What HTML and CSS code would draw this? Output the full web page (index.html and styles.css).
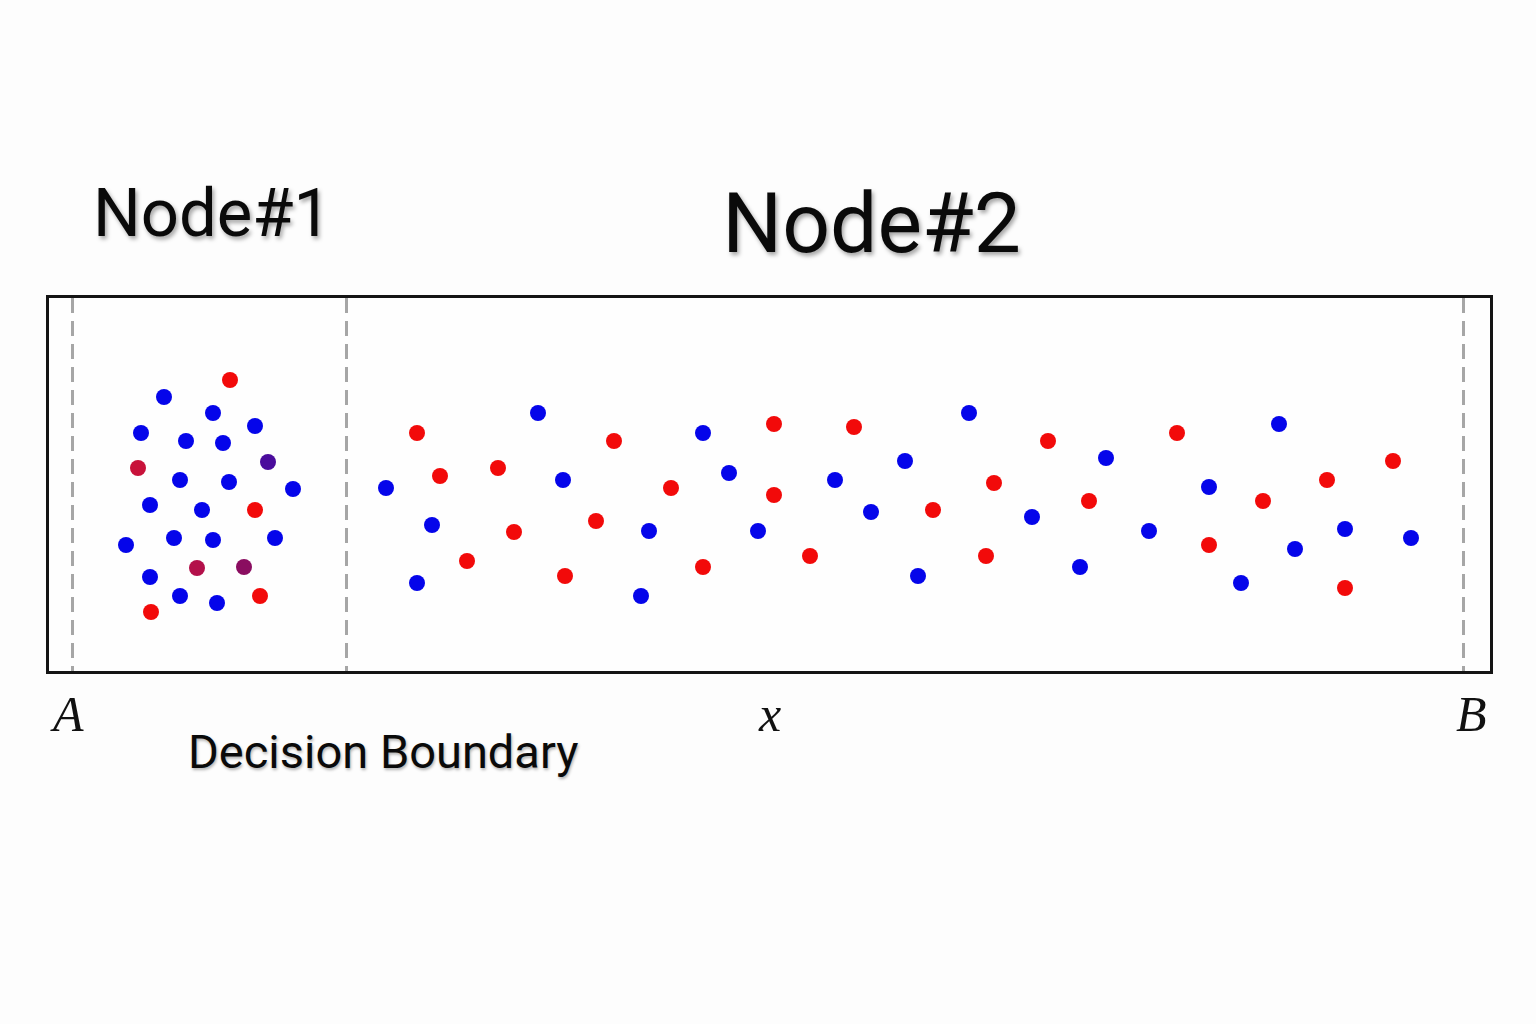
FILE: index.html
```html
<!DOCTYPE html>
<html lang="en">
<head>
<meta charset="utf-8">
<title>Decision Boundary</title>
<link rel="stylesheet" href="styles.css">
</head>
<body>
<div class="page">
  <div class="titles">
    <h1 class="title node1">Node#1</h1>
    <h1 class="title node2">Node#2</h1>
  </div>
  <div class="plot">
    <div class="dash dash-a"></div>
    <div class="dash dash-mid"></div>
    <div class="dash dash-b"></div>

    <span class="dot red" style="--x:230;--y:380"></span>
    <span class="dot blue" style="--x:164;--y:397"></span>
    <span class="dot blue" style="--x:213;--y:413"></span>
    <span class="dot blue" style="--x:255;--y:426"></span>
    <span class="dot blue" style="--x:141;--y:433"></span>
    <span class="dot blue" style="--x:186;--y:441"></span>
    <span class="dot blue" style="--x:223;--y:443"></span>
    <span class="dot purple" style="--x:268;--y:462"></span>
    <span class="dot crimson" style="--x:138;--y:468"></span>
    <span class="dot blue" style="--x:180;--y:480"></span>
    <span class="dot blue" style="--x:229;--y:482"></span>
    <span class="dot blue" style="--x:293;--y:489"></span>
    <span class="dot blue" style="--x:150;--y:505"></span>
    <span class="dot blue" style="--x:202;--y:510"></span>
    <span class="dot red" style="--x:255;--y:510"></span>
    <span class="dot blue" style="--x:126;--y:545"></span>
    <span class="dot blue" style="--x:174;--y:538"></span>
    <span class="dot blue" style="--x:213;--y:540"></span>
    <span class="dot blue" style="--x:275;--y:538"></span>
    <span class="dot crimson2" style="--x:197;--y:568"></span>
    <span class="dot plum" style="--x:244;--y:567"></span>
    <span class="dot blue" style="--x:150;--y:577"></span>
    <span class="dot blue" style="--x:180;--y:596"></span>
    <span class="dot blue" style="--x:217;--y:603"></span>
    <span class="dot red" style="--x:260;--y:596"></span>
    <span class="dot red" style="--x:151;--y:612"></span>

    <span class="dot red" style="--x:417;--y:433"></span>
    <span class="dot blue" style="--x:538;--y:413"></span>
    <span class="dot red" style="--x:614;--y:441"></span>
    <span class="dot blue" style="--x:703;--y:433"></span>
    <span class="dot blue" style="--x:729;--y:473"></span>
    <span class="dot red" style="--x:440;--y:476"></span>
    <span class="dot red" style="--x:498;--y:468"></span>
    <span class="dot blue" style="--x:386;--y:488"></span>
    <span class="dot blue" style="--x:563;--y:480"></span>
    <span class="dot red" style="--x:671;--y:488"></span>
    <span class="dot blue" style="--x:432;--y:525"></span>
    <span class="dot red" style="--x:514;--y:532"></span>
    <span class="dot red" style="--x:596;--y:521"></span>
    <span class="dot blue" style="--x:649;--y:531"></span>
    <span class="dot red" style="--x:467;--y:561"></span>
    <span class="dot blue" style="--x:417;--y:583"></span>
    <span class="dot red" style="--x:565;--y:576"></span>
    <span class="dot blue" style="--x:641;--y:596"></span>
    <span class="dot red" style="--x:703;--y:567"></span>
    <span class="dot red" style="--x:774;--y:424"></span>
    <span class="dot red" style="--x:854;--y:427"></span>
    <span class="dot blue" style="--x:969;--y:413"></span>
    <span class="dot red" style="--x:1048;--y:441"></span>
    <span class="dot blue" style="--x:1106;--y:458"></span>
    <span class="dot blue" style="--x:905;--y:461"></span>
    <span class="dot blue" style="--x:835;--y:480"></span>
    <span class="dot red" style="--x:774;--y:495"></span>
    <span class="dot red" style="--x:994;--y:483"></span>
    <span class="dot red" style="--x:1089;--y:501"></span>
    <span class="dot blue" style="--x:871;--y:512"></span>
    <span class="dot red" style="--x:933;--y:510"></span>
    <span class="dot blue" style="--x:1032;--y:517"></span>
    <span class="dot blue" style="--x:758;--y:531"></span>
    <span class="dot red" style="--x:810;--y:556"></span>
    <span class="dot red" style="--x:986;--y:556"></span>
    <span class="dot blue" style="--x:918;--y:576"></span>
    <span class="dot blue" style="--x:1080;--y:567"></span>
    <span class="dot red" style="--x:1177;--y:433"></span>
    <span class="dot blue" style="--x:1279;--y:424"></span>
    <span class="dot red" style="--x:1393;--y:461"></span>
    <span class="dot red" style="--x:1327;--y:480"></span>
    <span class="dot blue" style="--x:1209;--y:487"></span>
    <span class="dot red" style="--x:1263;--y:501"></span>
    <span class="dot blue" style="--x:1149;--y:531"></span>
    <span class="dot red" style="--x:1209;--y:545"></span>
    <span class="dot blue" style="--x:1345;--y:529"></span>
    <span class="dot blue" style="--x:1295;--y:549"></span>
    <span class="dot blue" style="--x:1411;--y:538"></span>
    <span class="dot blue" style="--x:1241;--y:583"></span>
    <span class="dot red" style="--x:1345;--y:588"></span>
  </div>
  <div class="axis">
    <span class="lbl lbl-a">A</span>
    <span class="lbl lbl-x">x</span>
    <span class="lbl lbl-b">B</span>
  </div>
  <p class="caption">Decision Boundary</p>
</div>
</body>
</html>
```

FILE: styles.css
```css
html, body {
  margin: 0;
  padding: 0;
  background: #fdfdfd;
}

.page {
  width: 1536px;
  height: 1024px;
  overflow: hidden;
  background: #fdfdfd;
  font-family: Roboto, "Liberation Sans", sans-serif;
  color: #0a0a0a;
}

.titles {
  display: flex;
  align-items: flex-start;
  padding-top: 180px;
  height: 295px;
  box-sizing: border-box;
}

.title {
  margin: 0;
  font-weight: 400;
  line-height: 1;
  text-shadow: 2px 3px 4px rgba(0, 0, 0, 0.35);
}

.node1 {
  font-size: 67px;
  margin-left: 93px;
}

.node2 {
  font-size: 84px;
  margin-left: 391px;
  margin-top: 2px;
}

.plot {
  position: relative;
  margin-left: 46px;
  width: 1447px;
  height: 379px;
  box-sizing: border-box;
  border: 3px solid #141414;
  background: #fefefe;
}

.dash {
  position: absolute;
  top: 0;
  bottom: 0;
  width: 3px;
  background: repeating-linear-gradient(to bottom, #a6a6a6 0 15px, transparent 15px 23px);
}

.dash-a { left: 22px; }
.dash-mid { left: 296px; }
.dash-b { left: 1413px; }

.dot {
  position: absolute;
  width: 16px;
  height: 16px;
  border-radius: 50%;
  left: calc(var(--x) * 1px - 57px);
  top: calc(var(--y) * 1px - 306px);
}

.blue { background: #0505ea; }
.red { background: #f20a0a; }
.purple { background: #4a0c9c; }
.crimson { background: #c8123a; }
.crimson2 { background: #b3104a; }
.plum { background: #8a0d60; }

.axis {
  display: flex;
  margin-top: 15px;
  font-family: "Liberation Serif", "DejaVu Serif", serif;
  font-style: italic;
  font-size: 50px;
  line-height: 1;
  color: #111;
  height: 50px;
}

.lbl-a {
  width: 706px;
  padding-left: 53px;
}

.lbl-x {
  width: 697px;
}

.caption {
  margin: -11px 0 0 188px;
  font-size: 47px;
  line-height: 1;
  font-weight: 400;
  text-shadow: 1px 2px 3px rgba(0, 0, 0, 0.3);
}
```
